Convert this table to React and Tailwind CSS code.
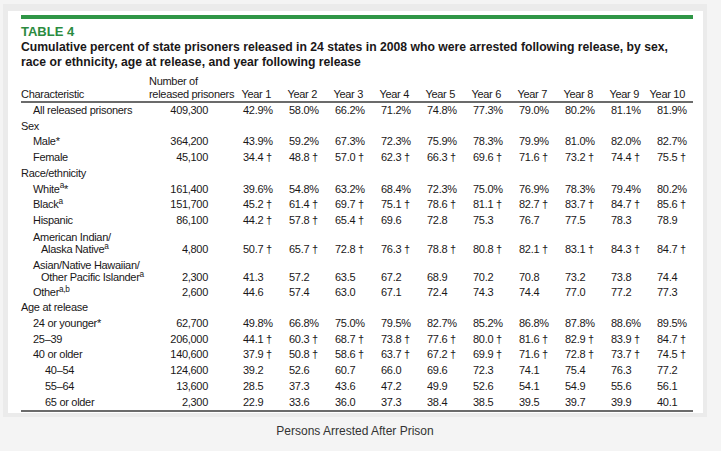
import React from "react";

const cols = "grid grid-cols-[128px_94px_repeat(9,46px)_36px]";

const rows = [
  { label: "All released prisoners", pad: "pl-[12px]", n: "409,300", v: ["42.9%", "58.0%", "66.2%", "71.2%", "74.8%", "77.3%", "79.0%", "80.2%", "81.1%", "81.9%"] },
  { label: "Sex", head: true },
  { label: <>Male*</>, pad: "pl-[12px]", n: "364,200", v: ["43.9%", "59.2%", "67.3%", "72.3%", "75.9%", "78.3%", "79.9%", "81.0%", "82.0%", "82.7%"] },
  { label: "Female", pad: "pl-[12px]", n: "45,100", v: ["34.4 †", "48.8 †", "57.0 †", "62.3 †", "66.3 †", "69.6 †", "71.6 †", "73.2 †", "74.4 †", "75.5 †"] },
  { label: "Race/ethnicity", head: true },
  { label: <>White<sup>a</sup>*</>, pad: "pl-[12px]", n: "161,400", v: ["39.6%", "54.8%", "63.2%", "68.4%", "72.3%", "75.0%", "76.9%", "78.3%", "79.4%", "80.2%"] },
  { label: <>Black<sup>a</sup></>, pad: "pl-[12px]", n: "151,700", v: ["45.2 †", "61.4 †", "69.7 †", "75.1 †", "78.6 †", "81.1 †", "82.7 †", "83.7 †", "84.7 †", "85.6 †"] },
  { label: "Hispanic", pad: "pl-[12px]", n: "86,100", v: ["44.2 †", "57.8 †", "65.4 †", "69.6", "72.8", "75.3", "76.7", "77.5", "78.3", "78.9"] },
  { label: "American Indian/", label2: <>Alaska Native<sup>a</sup></>, pad: "pl-[12px]", n: "4,800", v: ["50.7 †", "65.7 †", "72.8 †", "76.3 †", "78.8 †", "80.8 †", "82.1 †", "83.1 †", "84.3 †", "84.7 †"] },
  { label: "Asian/Native Hawaiian/", label2: <>Other Pacific Islander<sup>a</sup></>, pad: "pl-[12px]", n: "2,300", v: ["41.3", "57.2", "63.5", "67.2", "68.9", "70.2", "70.8", "73.2", "73.8", "74.4"] },
  { label: <>Other<sup>a,b</sup></>, pad: "pl-[12px]", n: "2,600", v: ["44.6", "57.4", "63.0", "67.1", "72.4", "74.3", "74.4", "77.0", "77.2", "77.3"] },
  { label: "Age at release", head: true },
  { label: <>24 or younger*</>, pad: "pl-[12px]", n: "62,700", v: ["49.8%", "66.8%", "75.0%", "79.5%", "82.7%", "85.2%", "86.8%", "87.8%", "88.6%", "89.5%"] },
  { label: "25–39", pad: "pl-[12px]", n: "206,000", v: ["44.1 †", "60.3 †", "68.7 †", "73.8 †", "77.6 †", "80.0 †", "81.6 †", "82.9 †", "83.9 †", "84.7 †"] },
  { label: "40 or older", pad: "pl-[12px]", n: "140,600", v: ["37.9 †", "50.8 †", "58.6 †", "63.7 †", "67.2 †", "69.9 †", "71.6 †", "72.8 †", "73.7 †", "74.5 †"] },
  { label: "40–54", pad: "pl-[24px]", n: "124,600", v: ["39.2", "52.6", "60.7", "66.0", "69.6", "72.3", "74.1", "75.4", "76.3", "77.2"] },
  { label: "55–64", pad: "pl-[24px]", n: "13,600", v: ["28.5", "37.3", "43.6", "47.2", "49.9", "52.6", "54.1", "54.9", "55.6", "56.1"] },
  { label: "65 or older", pad: "pl-[24px]", n: "2,300", v: ["22.9", "33.6", "36.0", "37.3", "38.4", "38.5", "39.5", "39.7", "39.9", "40.1"] },
];

const years = ["Year 1", "Year 2", "Year 3", "Year 4", "Year 5", "Year 6", "Year 7", "Year 8", "Year 9", "Year 10"];

function Row({ r }) {
  if (r.head) {
    return (
      <div className={`${cols} leading-[15.7px]`}>
        <div className="whitespace-nowrap">{r.label}</div>
      </div>
    );
  }

  if (r.label2) {
    return (
      <div className={`${cols} pt-[2px] pb-[2px] leading-[12px]`}>
        <div className={`${r.pad} whitespace-nowrap`}>
          <div>{r.label}</div>
          <div className="pl-[8px]">{r.label2}</div>
        </div>
        <div className="pt-[12px] pr-[35px] text-right">{r.n}</div>
        {r.v.map((x, i) => (
          <div key={i} className="pt-[12px] whitespace-nowrap">
            {x}
          </div>
        ))}
      </div>
    );
  }

  return (
    <div className={`${cols} leading-[15.7px]`}>
      <div className={`${r.pad} whitespace-nowrap`}>{r.label}</div>
      <div className="pr-[35px] text-right">{r.n}</div>
      {r.v.map((x, i) => (
        <div key={i} className="whitespace-nowrap">
          {x}
        </div>
      ))}
    </div>
  );
}

export default function App() {
  return (
    <div className="w-[721px] h-[451px] overflow-hidden bg-[#f4f4f4] pt-[4px] font-['Liberation_Sans',Arial,sans-serif]">
      <div className="ml-[3px] w-[704px] bg-[#ebebeb] pt-[7px] pl-[5px] pr-[4px] pb-[4px]">
        <div className="h-[402px] overflow-hidden bg-white pl-[13px] pt-[4px] text-[#1a1718]">
          <div className="h-[4px] w-[672px] bg-[#2f9646]" />

          <h1 className="mt-[5px] text-[13px] leading-[15px] font-bold text-[#2b8b40]">
            TABLE 4
          </h1>
          <h2 className="mt-[1px] text-[12.2px] leading-[15px] font-bold whitespace-nowrap">
            Cumulative percent of state prisoners released in 24 states in 2008 who were arrested following release, by sex,
            <br />
            race or ethnicity, age at release, and year following release
          </h2>

          <div className="mt-[5px] w-[672px] text-[11px] tracking-[-0.3px]">
            <div className={`${cols} border-b-2 border-[#6b6b6b] leading-[13px]`}>
              <div className="flex items-end">Characteristic</div>
              <div className="whitespace-nowrap">
                <div>Number of</div>
                <div>released prisoners</div>
              </div>
              {years.map((y) => (
                <div key={y} className="flex w-[28px] items-end justify-end whitespace-nowrap">
                  {y}
                </div>
              ))}
            </div>

            {rows.map((r, i) => (
              <Row key={i} r={r} />
            ))}

            <div className="border-t-2 border-[#6b6b6b]" />
            <div className="text-[10px] leading-[11px] tracking-normal text-[#888] whitespace-nowrap">
              Note: Percentages are based on the number of persons released in 2008. The number of released prisoners was rounded to the nearest 100.
            </div>
          </div>
        </div>
      </div>

      <p className="ml-[3px] mt-[7px] w-[704px] text-center text-[12px] leading-[14px] text-[#333]">
        Persons Arrested After Prison
      </p>
    </div>
  );
}
